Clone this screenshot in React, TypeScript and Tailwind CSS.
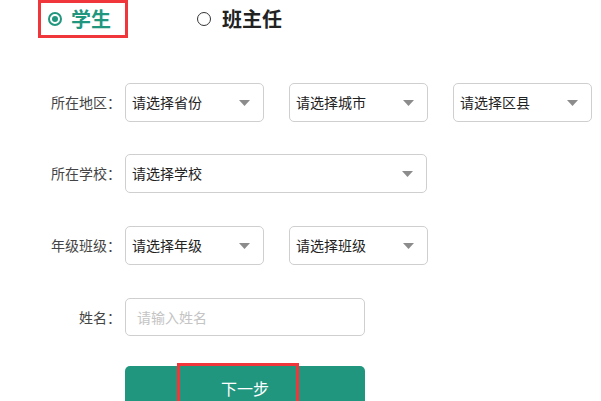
import React from "react";

const font = {
  fontFamily: '"Noto Sans CJK SC", "Liberation Sans", sans-serif',
};

function Caret() {
  return (
    <svg width="11" height="6" viewBox="0 0 11 6" className="shrink-0">
      <path d="M0 0 L11 0 L5.5 6 Z" fill="#8c8c8c" />
    </svg>
  );
}

function Select({ text, w = "w-[139px]" }: { text: string; w?: string }) {
  return (
    <div
      className={`${w} h-[39px] border border-[#cfcfcf] rounded-[5px] flex items-center justify-between pl-[6px] pr-[13px] text-[14px] text-[#222] bg-white`}
    >
      <span>{text}</span>
      <Caret />
    </div>
  );
}

function Label({ text }: { text: string }) {
  return (
    <div className="w-[121px] text-right text-[14px] text-[#444] shrink-0 mr-[4px]">
      {text}
    </div>
  );
}

export default function App() {
  return (
    <div className="w-[601px] h-[401px] bg-white overflow-hidden" style={font}>
      {/* Role switch */}
      <div className="flex items-center h-[38px] pl-[38px]">
        <div className="h-[38px] w-[90px] border-[3px] border-[#f0363a] flex items-center pl-[7px]">
          <span className="w-[14px] h-[14px] rounded-full border-2 border-[#21967f] flex items-center justify-center">
            <span className="w-[6px] h-[6px] rounded-full bg-[#21967f]" />
          </span>
          <span className="ml-[9px] text-[20px] font-bold text-[#21967f] leading-none">
            学生
          </span>
        </div>
        <div className="flex items-center ml-[69px]">
          <span className="w-[14px] h-[14px] rounded-full border-[1.5px] border-[#333]" />
          <span className="ml-[11px] text-[20px] font-bold text-[#222] leading-none">
            班主任
          </span>
        </div>
      </div>

      {/* Form */}
      <div className="flex flex-col mt-[45px]">
        <div className="flex items-center">
          <Label text="所在地区：" />
          <div className="flex gap-[25px]">
            <Select text="请选择省份" />
            <Select text="请选择城市" />
            <Select text="请选择区县" />
          </div>
        </div>

        <div className="flex items-center mt-[32px]">
          <Label text="所在学校：" />
          <Select text="请选择学校" w="w-[302px]" />
        </div>

        <div className="flex items-center mt-[33px]">
          <Label text="年级班级：" />
          <div className="flex gap-[25px]">
            <Select text="请选择年级" />
            <Select text="请选择班级" />
          </div>
        </div>

        <div className="flex items-center mt-[33px]">
          <Label text="姓名：" />
          <div className="w-[240px] h-[38px] border border-[#cfcfcf] rounded-[5px] flex items-center pl-[11px] text-[14px] text-[#c4c4c4]">
            请输入姓名
          </div>
        </div>

        <div className="flex mt-[30px] pl-[125px]">
          <div className="relative w-[240px] h-[44px] bg-[#21967f] rounded-[5px] flex items-center justify-center text-[16px] text-white">
            下一步
            <div className="absolute left-[52px] top-[-3px] w-[122px] h-[50px] border-[3px] border-[#f0363a]" />
          </div>
        </div>
      </div>
    </div>
  );
}
